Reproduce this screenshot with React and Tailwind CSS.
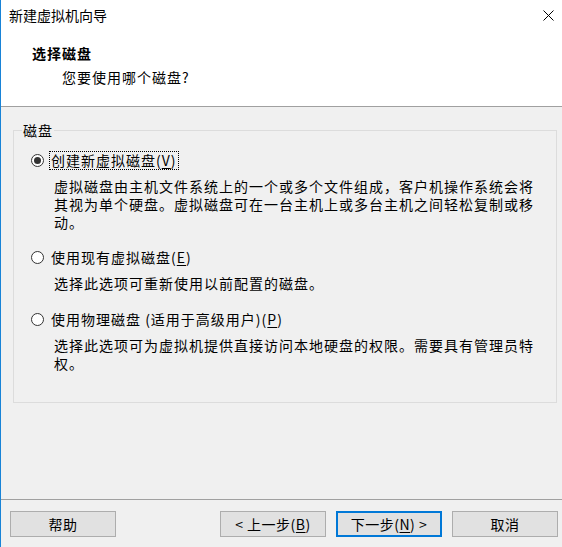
import React from 'react';

const font = { fontFamily: '"Noto Sans CJK SC", "Noto Sans", sans-serif' };

function Radio({ checked }) {
  return (
    <span className="w-[13px] h-[13px] rounded-full border border-[#333333] bg-white flex items-center justify-center shrink-0">
      {checked && <span className="w-[7px] h-[7px] rounded-full bg-[#333333]" />}
    </span>
  );
}

function Option({ checked, focused, label, hotkey, desc, className }) {
  return (
    <div className={className}>
      <div className="flex items-center h-[18px]">
        <Radio checked={checked} />
        <span
          className={`ml-[5px] leading-[17px] px-[1px] border border-dotted ${
            focused ? 'border-black' : 'border-transparent'
          }`}
        >
          {label}(<span className="underline underline-offset-2">{hotkey}</span>)
        </span>
      </div>
      <p className="mt-[8px] ml-[23px] w-[482px] leading-[18px]">{desc}</p>
    </div>
  );
}

function Button({ children, primary }) {
  return (
    <button
      className={`w-[106px] h-[26px] bg-[#e1e1e1] text-[14px] tracking-[0.5px] flex items-center justify-center ${
        primary ? 'border-2 border-[#0078d7]' : 'border border-[#adadad]'
      }`}
    >
      {children}
    </button>
  );
}

export default function App() {
  return (
    <div
      className="h-[547px] w-[562px] flex flex-col bg-[#f0f0f0] text-black border-l border-[#1883d7] text-[14px] tracking-[1px] overflow-hidden"
      style={font}
    >
      {/* Title bar */}
      <div className="h-[31px] bg-white flex items-center justify-between pl-[8px] pr-[9px]">
        <span className="tracking-normal">新建虚拟机向导</span>
        <svg width="11" height="11" viewBox="0 0 11 11" className="mr-[-1px]">
          <path d="M0.5 0.5 L10.5 10.5 M10.5 0.5 L0.5 10.5" stroke="#000" strokeWidth="1" />
        </svg>
      </div>

      {/* Header */}
      <div className="h-[76px] bg-white border-b border-[#a0a0a0] pt-[13px]">
        <div className="ml-[31px] font-bold leading-[18px]">选择磁盘</div>
        <div className="ml-[61px] mt-[6px] leading-[18px]">您要使用哪个磁盘?</div>
      </div>

      {/* Disk group */}
      <fieldset className="mt-[16px] ml-[12px] mr-[5px] border border-[#dcdcdc] pl-[17px] pt-[14px] pb-[30px]">
        <legend className="ml-[-9px] px-[1px] leading-[14px]">磁盘</legend>
        <Option
          checked
          focused
          label="创建新虚拟磁盘"
          hotkey="V"
          desc="虚拟磁盘由主机文件系统上的一个或多个文件组成，客户机操作系统会将其视为单个硬盘。虚拟磁盘可在一台主机上或多台主机之间轻松复制或移动。"
        />
        <Option
          className="mt-[17px]"
          label="使用现有虚拟磁盘"
          hotkey="E"
          desc="选择此选项可重新使用以前配置的磁盘。"
        />
        <Option
          className="mt-[18px]"
          label="使用物理磁盘 (适用于高级用户)"
          hotkey="P"
          desc="选择此选项可为虚拟机提供直接访问本地硬盘的权限。需要具有管理员特权。"
        />
      </fieldset>

      {/* Footer */}
      <div className="mt-auto border-t border-[#a0a0a0] pt-[11px] pb-[10px] pl-[9px] pr-[4px] flex items-center">
        <Button>帮助</Button>
        <div className="ml-auto flex gap-[10px]">
          <Button>
            &lt; 上一步(<span className="underline underline-offset-2">B</span>)
          </Button>
          <Button primary>
            下一步(<span className="underline underline-offset-2">N</span>) &gt;
          </Button>
          <Button>取消</Button>
        </div>
      </div>
    </div>
  );
}
